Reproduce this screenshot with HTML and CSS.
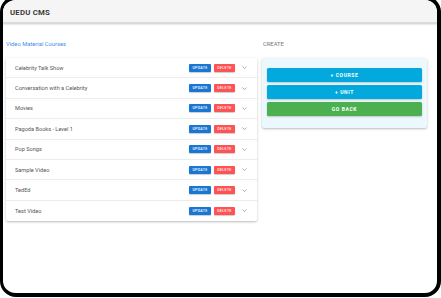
FILE: index.html
```html
<!DOCTYPE html>
<html>
<head>
<meta charset="utf-8">
<link rel="stylesheet" href="styles.css">
</head>
<body>
<div class="frame">
  <header class="topbar"><span class="brand">UEDU CMS</span></header>
  <main class="content">
    <section class="col-left">
      <h2 class="title title-blue">Video Material Courses</h2>
      <div class="card list">
        <div class="row"><span class="name">Celebrity Talk Show</span><span class="btn btn-update">UPDATE</span><span class="btn btn-delete">DELETE</span><svg class="chev" viewBox="0 0 10 6"><path d="M1 1l4 4 4-4" fill="none" stroke="#777" stroke-width="1.2"/></svg></div>
        <div class="row"><span class="name">Conversation with a Celebrity</span><span class="btn btn-update">UPDATE</span><span class="btn btn-delete">DELETE</span><svg class="chev" viewBox="0 0 10 6"><path d="M1 1l4 4 4-4" fill="none" stroke="#777" stroke-width="1.2"/></svg></div>
        <div class="row"><span class="name">Movies</span><span class="btn btn-update">UPDATE</span><span class="btn btn-delete">DELETE</span><svg class="chev" viewBox="0 0 10 6"><path d="M1 1l4 4 4-4" fill="none" stroke="#777" stroke-width="1.2"/></svg></div>
        <div class="row"><span class="name">Pagoda Books - Level 1</span><span class="btn btn-update">UPDATE</span><span class="btn btn-delete">DELETE</span><svg class="chev" viewBox="0 0 10 6"><path d="M1 1l4 4 4-4" fill="none" stroke="#777" stroke-width="1.2"/></svg></div>
        <div class="row"><span class="name">Pop Songs</span><span class="btn btn-update">UPDATE</span><span class="btn btn-delete">DELETE</span><svg class="chev" viewBox="0 0 10 6"><path d="M1 1l4 4 4-4" fill="none" stroke="#777" stroke-width="1.2"/></svg></div>
        <div class="row"><span class="name">Sample Video</span><span class="btn btn-update">UPDATE</span><span class="btn btn-delete">DELETE</span><svg class="chev" viewBox="0 0 10 6"><path d="M1 1l4 4 4-4" fill="none" stroke="#777" stroke-width="1.2"/></svg></div>
        <div class="row"><span class="name">TedEd</span><span class="btn btn-update">UPDATE</span><span class="btn btn-delete">DELETE</span><svg class="chev" viewBox="0 0 10 6"><path d="M1 1l4 4 4-4" fill="none" stroke="#777" stroke-width="1.2"/></svg></div>
        <div class="row"><span class="name">Test Video</span><span class="btn btn-update">UPDATE</span><span class="btn btn-delete">DELETE</span><svg class="chev" viewBox="0 0 10 6"><path d="M1 1l4 4 4-4" fill="none" stroke="#777" stroke-width="1.2"/></svg></div>
      </div>
    </section>
    <section class="col-right">
      <h2 class="title title-gray">CREATE</h2>
      <div class="card create">
        <div class="big big-cyan">+ COURSE</div>
        <div class="big big-cyan">+ UNIT</div>
        <div class="big big-green">GO BACK</div>
      </div>
    </section>
  </main>
</div>
</body>
</html>
```

FILE: styles.css
```css
html, body {
  margin: 0;
  padding: 0;
  background: #fff;
}
body {
  width: 441px;
  height: 298px;
  overflow: hidden;
  font-family: Roboto, "Liberation Sans", sans-serif;
}
.frame {
  box-sizing: border-box;
  width: 441px;
  height: 301px;
  margin-top: -4px;
  border: 4px solid #000;
  border-left-width: 3px;
  border-radius: 16px;
  overflow: hidden;
  background: #fff;
}
.topbar {
  box-sizing: border-box;
  height: 24px;
  background: #f5f5f5;
  border-bottom: 2px solid #dadada;
  box-shadow: 0 1px 1px rgba(0,0,0,0.08);
  display: flex;
  align-items: center;
  padding-left: 7px;
  padding-top: 3px;
}
.brand {
  font-size: 7.8px;
  font-weight: 700;
  color: #3a3a3a;
  letter-spacing: 0.2px;
}
.content {
  display: grid;
  grid-template-columns: 251px 165px;
  column-gap: 5px;
  padding: 16px 0 0 3px;
  align-items: start;
}
.title {
  margin: 0 0 10px 0;
  height: 8px;
  line-height: 8px;
  font-weight: 400;
  font-size: 5.8px;
}
.title-blue { color: #3f8fe6; }
.title-gray { color: #777; padding-left: 1px; }
.card {
  background: #fff;
  border-radius: 2px;
  box-shadow: 0 1px 3px rgba(0,0,0,0.2), 0 1px 1px rgba(0,0,0,0.08);
}
.row {
  box-sizing: border-box;
  height: 20.4px;
  display: flex;
  align-items: center;
  padding: 0 10px 0 9px;
  border-bottom: 1px solid #ececec;
}
.row:last-child { border-bottom: none; }
.name {
  flex: 1;
  font-size: 5.6px;
  color: #555;
}
.btn {
  box-sizing: border-box;
  height: 8px;
  display: flex;
  align-items: center;
  justify-content: center;
  font-size: 3.6px;
  font-weight: 500;
  letter-spacing: 0.3px;
  color: #fff;
  border-radius: 1px;
  box-shadow: 0 1px 1px rgba(0,0,0,0.2);
}
.btn-update { width: 22px; background: #1976d2; }
.btn-delete { width: 21px; background: #ff5252; margin-left: 3px; }
.chev {
  width: 5px;
  height: 3px;
  margin-left: 7px;
}
.create {
  background: #ebf8fd;
  padding: 10px 5px 12px 5px;
  display: flex;
  flex-direction: column;
  gap: 3px;
}
.big {
  height: 14px;
  display: flex;
  align-items: center;
  justify-content: center;
  color: #fff;
  font-size: 5px;
  font-weight: 700;
  letter-spacing: 0.6px;
  border-radius: 1.5px;
  box-shadow: 0 1px 2px rgba(0,0,0,0.2);
}
.big-cyan { background: #03a9dc; }
.big-green { background: #4caf50; }
```
